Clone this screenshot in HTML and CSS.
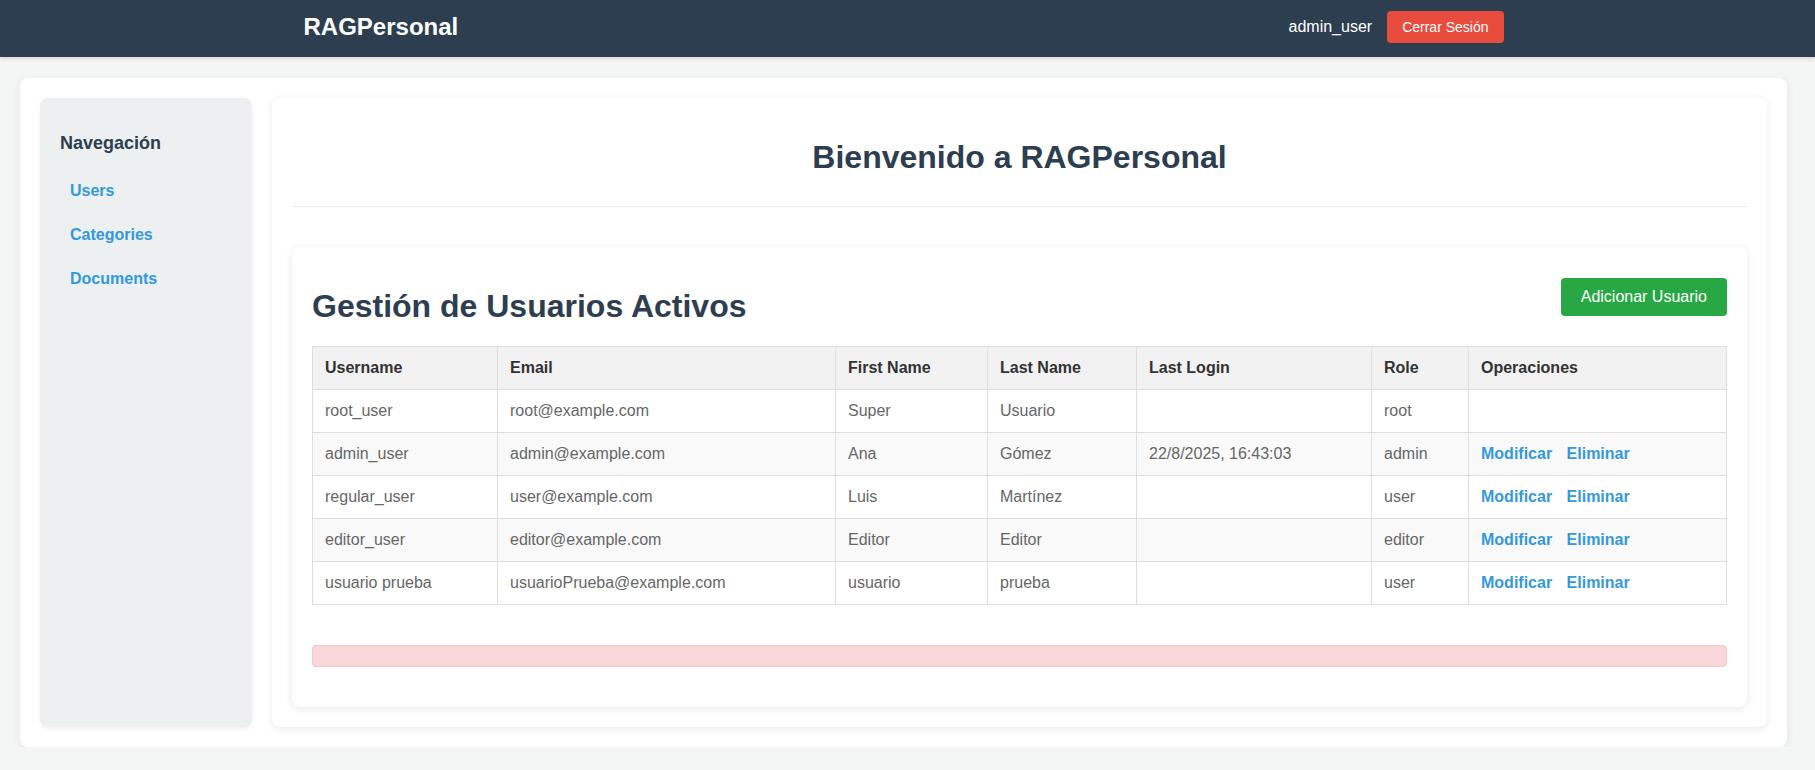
FILE: index.html
```html
<!DOCTYPE html>
<html lang="es">
<head>
<meta charset="utf-8">
<title>RAGPersonal</title>
<link rel="stylesheet" href="styles.css">
</head>
<body>
<header class="topbar">
  <div class="topbar-inner">
    <div class="brand">RAGPersonal</div>
    <div class="user-area">
      <span class="username">admin_user</span>
      <button class="btn btn-logout">Cerrar Sesión</button>
    </div>
  </div>
</header>

<div class="app">
  <aside class="sidebar">
    <h3 class="sidebar-title">Navegación</h3>
    <ul class="nav">
      <li><a href="#" class="nav-link">Users</a></li>
      <li><a href="#" class="nav-link">Categories</a></li>
      <li><a href="#" class="nav-link">Documents</a></li>
    </ul>
  </aside>

  <main class="content">
    <div class="page-head">
      <h1 class="page-title">Bienvenido a RAGPersonal</h1>
    </div>

    <section class="panel">
      <div class="panel-head">
        <h2 class="panel-title">Gestión de Usuarios Activos</h2>
        <button class="btn btn-add">Adicionar Usuario</button>
      </div>

      <table class="users">
        <colgroup>
          <col class="c1"><col class="c2"><col class="c3"><col class="c4"><col class="c5"><col class="c6"><col class="c7">
        </colgroup>
        <thead>
          <tr>
            <th>Username</th><th>Email</th><th>First Name</th><th>Last Name</th><th>Last Login</th><th>Role</th><th>Operaciones</th>
          </tr>
        </thead>
        <tbody>
          <tr>
            <td>root_user</td><td>root@example.com</td><td>Super</td><td>Usuario</td><td></td><td>root</td><td></td>
          </tr>
          <tr>
            <td>admin_user</td><td>admin@example.com</td><td>Ana</td><td>Gómez</td><td>22/8/2025, 16:43:03</td><td>admin</td>
            <td><a href="#" class="op">Modificar</a> <a href="#" class="op">Eliminar</a></td>
          </tr>
          <tr>
            <td>regular_user</td><td>user@example.com</td><td>Luis</td><td>Martínez</td><td></td><td>user</td>
            <td><a href="#" class="op">Modificar</a> <a href="#" class="op">Eliminar</a></td>
          </tr>
          <tr>
            <td>editor_user</td><td>editor@example.com</td><td>Editor</td><td>Editor</td><td></td><td>editor</td>
            <td><a href="#" class="op">Modificar</a> <a href="#" class="op">Eliminar</a></td>
          </tr>
          <tr>
            <td>usuario prueba</td><td>usuarioPrueba@example.com</td><td>usuario</td><td>prueba</td><td></td><td>user</td>
            <td><a href="#" class="op">Modificar</a> <a href="#" class="op">Eliminar</a></td>
          </tr>
        </tbody>
      </table>

      <div class="alert"></div>
    </section>
  </main>
</div>
</body>
</html>
```
FILE: styles.css
```css
* { box-sizing: border-box; }

html, body {
  margin: 0;
  padding: 0;
}

body {
  background: #f4f6f5;
  font-family: "Liberation Sans", Arial, sans-serif;
  font-size: 16px;
  color: #333;
}

.topbar {
  background: #2c3e50;
  color: #fff;
  height: 57px;
  padding: 11px 8px 14px 0;
  box-shadow: 0 2px 4px rgba(0, 0, 0, 0.12);
}

.topbar-inner {
  max-width: 1200px;
  height: 32px;
  margin: 0 auto;
  display: flex;
  align-items: center;
  justify-content: space-between;
}

.brand {
  font-size: 24px;
  font-weight: bold;
}

.user-area {
  display: flex;
  align-items: center;
}

.username {
  margin-right: 15px;
  font-size: 16px;
}

.btn {
  font-family: inherit;
  border: none;
  border-radius: 4px;
  color: #fff;
  cursor: pointer;
}

.btn-logout {
  background: #e74c3c;
  font-size: 14px;
  padding: 0 15px;
  height: 32px;
}

.app {
  margin: 21px 28px 0 20px;
  padding: 20px;
  background: #fff;
  border-radius: 8px;
  box-shadow: 0 2px 10px rgba(0, 0, 0, 0.07);
  display: flex;
  gap: 20px;
}

.sidebar {
  flex: 0 0 212px;
  background: #ecf0f1;
  border-radius: 8px;
  padding: 20px;
  box-shadow: 0 2px 5px rgba(0, 0, 0, 0.06);
}

.sidebar-title {
  font-size: 18px;
  color: #2c3e50;
  margin: 14.5px 0 15px;
}

.nav {
  list-style: none;
  margin: 0;
  padding: 0;
}

.nav-link {
  display: block;
  padding: 13px 10px;
  line-height: 18px;
  color: #3498db;
  font-weight: bold;
  text-decoration: none;
}

.content {
  flex: 1;
  background: #fff;
  border-radius: 8px;
  padding: 20px;
  box-shadow: 0 2px 10px rgba(0, 0, 0, 0.09);
}

.page-head {
  border-bottom: 1px solid #eee;
  padding-bottom: 8px;
  margin-bottom: 40px;
}

.page-title {
  text-align: center;
  font-size: 32px;
  color: #2c3e50;
  margin: 21.44px 0;
}

.panel {
  background: #fff;
  border-radius: 8px;
  padding: 20px;
  box-shadow: 0 2px 10px rgba(0, 0, 0, 0.09);
}

.panel-head {
  display: flex;
  align-items: center;
  justify-content: space-between;
  margin-bottom: 21px;
}

.panel-title {
  font-size: 32px;
  color: #2c3e50;
  margin: 21.5px 0 0;
}

.btn-add {
  background: #28a745;
  font-size: 16px;
  padding: 0 20px;
  height: 38px;
  margin-top: 2px;
}

.users {
  width: 100%;
  border-collapse: collapse;
  table-layout: fixed;
}

.users col.c1 { width: 185px; }
.users col.c2 { width: 338px; }
.users col.c3 { width: 152px; }
.users col.c4 { width: 149px; }
.users col.c5 { width: 235px; }
.users col.c6 { width: 97px; }
.users col.c7 { width: 258px; }

.users th,
.users td {
  border: 1px solid #ddd;
  padding: 12px;
  text-align: left;
  line-height: 18px;
  white-space: nowrap;
}

.users th {
  background: #f2f2f2;
  color: #333;
  font-weight: bold;
}

.users td {
  color: #666;
}

.users tbody tr:nth-child(even) td {
  background: #f9f9f9;
}

.op {
  color: #3498db;
  font-weight: bold;
  text-decoration: none;
  margin-right: 10px;
}

.alert {
  margin: 40px 0 20px;
  height: 22px;
  background: #f8d7da;
  border: 1px solid #f5c6cb;
  border-radius: 4px;
}
```
